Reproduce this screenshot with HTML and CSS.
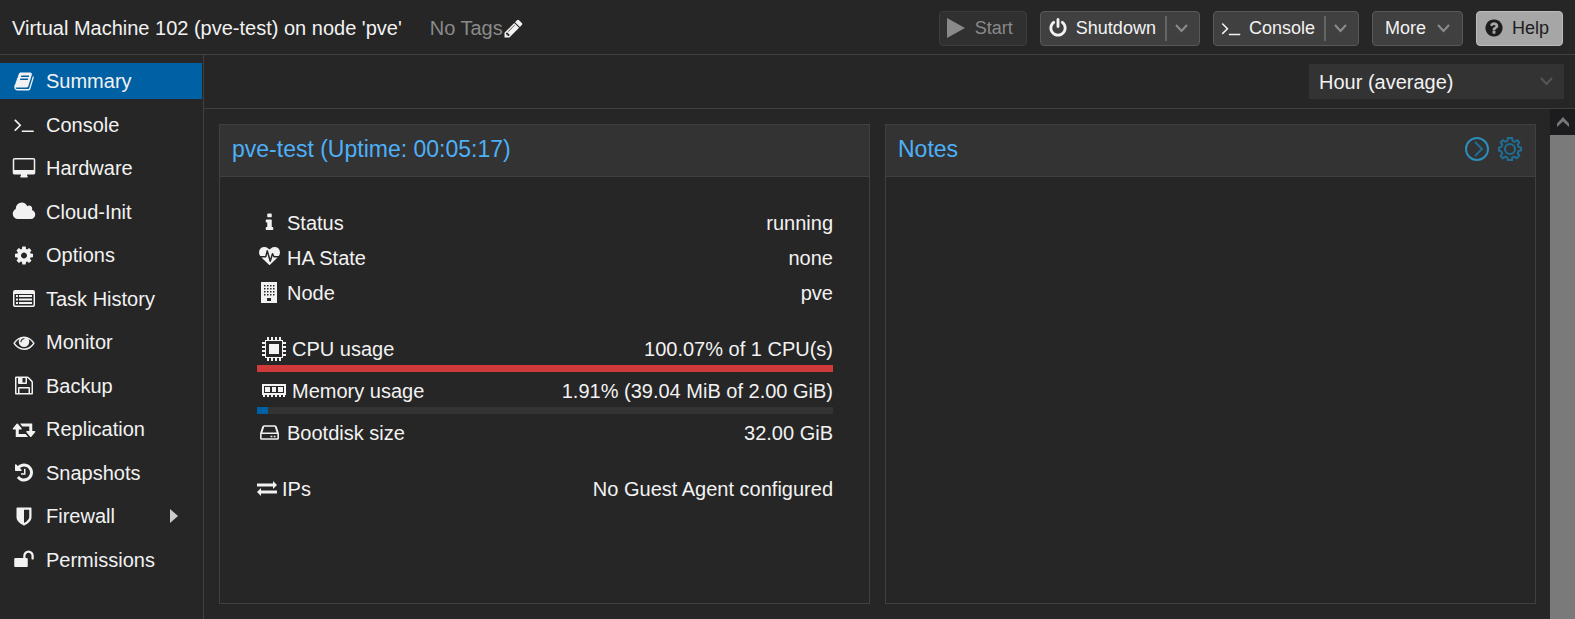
FILE: index.html
```html
<!DOCTYPE html>
<html lang="en">
<head>
<meta charset="utf-8">
<title>Virtual Machine 102</title>
<link rel="stylesheet" href="styles.css">
</head>
<body>
<header class="topbar">
  <h1 class="vm-title">Virtual Machine 102 (pve-test) on node 'pve'</h1>
  <div class="tags">
    <span>No Tags</span>
    <button class="icon-button tag-edit" type="button" aria-label="Edit tags"><svg class="icon" viewBox="0 0 1792 1792"><path d="M491 1536l91-91-235-235-91 91v107h128v128h107zm523-928q0-22-22-22-10 0-17 7l-542 542q-7 7-7 17 0 22 22 22 10 0 17-7l542-542q7-7 7-17zm-54-192l416 416-832 832h-416v-416zm683 96q0 53-37 90l-166 166-416-416 166-165q36-38 90-38 53 0 91 38l235 234q37 39 37 91z"/></svg></button>
  </div>
  <div class="actions">
    <button class="btn" type="button" disabled><svg class="btn-icon" viewBox="0 0 20 20"><path d="M0 0L18 10 0 20z"/></svg>Start</button>
    <div class="split">
      <button class="split-main" type="button"><svg class="btn-icon" viewBox="0 0 1792 1792"><path d="M1664 896q0 156-61 298t-164 245-245 164-298 61-298-61-245-164-164-245-61-298q0-182 80.5-343t226.5-270q43-32 95.5-25t83.5 50q32 42 24.5 94.5t-49.5 84.5q-98 74-151.5 181t-53.5 228q0 104 40.5 198.5t109.5 163.5 163.5 109.5 198.5 40.5 198.5-40.5 163.5-109.5 109.5-163.5 40.5-198.5q0-121-53.5-228t-151.5-181q-42-32-49.5-84.5t24.5-94.5q31-43 84-50t95 25q146 109 226.5 270t80.5 343zm-640-768v640q0 52-38 90t-90 38-90-38-38-90v-640q0-52 38-90t90-38 90 38 38 90z"/></svg>Shutdown</button>
      <button class="split-arrow" type="button" aria-label="Shutdown options"><svg class="chevron" viewBox="0 0 13 9"><path d="M1 1l5.500 6L12 1"/></svg></button>
    </div>
    <div class="split">
      <button class="split-main" type="button"><svg class="btn-icon" viewBox="0 0 1792 1792"><path d="M649 983l-466 466q-10 10-23 10t-23-10l-50-50q-10-10-10-23t10-23l393-393-393-393q-10-10-10-23t10-23l50-50q10-10 23-10t23 10l466 466q10 10 10 23t-10 23zm1079 457v64q0 14-9 23t-23 9h-960q-14 0-23-9t-9-23v-64q0-14 9-23t23-9h960q14 0 23 9t9 23z"/></svg>Console</button>
      <button class="split-arrow" type="button" aria-label="Console options"><svg class="chevron" viewBox="0 0 13 9"><path d="M1 1l5.500 6L12 1"/></svg></button>
    </div>
    <button class="btn btn-menu" type="button">More<svg class="chevron" viewBox="0 0 13 9"><path d="M1 1l5.500 6L12 1"/></svg></button>
    <button class="btn btn-help" type="button"><svg class="btn-icon" viewBox="0 0 1792 1792"><path d="M1024 1376v-192q0-14-9-23t-23-9h-192q-14 0-23 9t-9 23v192q0 14 9 23t23 9h192q14 0 23-9t9-23zm256-672q0-88-55.500-163t-138.500-116-170-41q-243 0-371 213-15 24 8 42l132 100q7 6 19 6 16 0 25-12 53-68 86-92 34-24 86-24 48 0 85.500 26t37.500 59q0 38-20 61t-68 45q-63 28-115.500 86.500t-52.500 125.500v36q0 14 9 23t23 9h192q14 0 23-9t9-23q0-19 21.500-49.500t54.500-49.500q32-18 49-28.500t46-35 44.500-48 28-60.500 12.500-81zm384 192q0 209-103 385.500t-279.500 279.500-385.500 103-385.500-103-279.500-279.500-103-385.500 103-385.500 279.500-279.500 385.500-103 385.500 103 279.500 279.500 103 385.500z"/></svg>Help</button>
  </div>
</header>

<div class="workspace">
  <nav class="sidebar" aria-label="Virtual machine">
    <ul class="menu">
      <li><a class="item active" href="#summary"><svg class="icon" viewBox="0 0 1792 1792"><path d="M1703 478q40 57 18 129l-275 906q-19 64-76.500 107.500t-122.500 43.500h-923q-77 0-148.500-53.500t-99.500-131.500q-24-67-2-127 0-4 3-27t4-37q1-8-3-21.500t-3-19.500q2-11 8-21t16.500-23.500 16.500-23.500q23-38 45-91.500t30-91.500q3-10 .5-30t-.5-28q3-11 17-28t17-23q21-36 42-92t25-90q1-9-2.500-32t.5-28q4-13 22-30.500t22-22.500q19-26 42.500-84.500t27.500-96.500q1-8-3-25.500t-2-26.500q2-8 9-18t18-23 17-21q8-12 16.500-30.500t15-35 16-36 19.500-32 26.500-23.500 36-11.500 47.500 5.500l-1 3q38-9 51-9h761q74 0 114 56t18 130l-274 906q-36 119-71.500 153.500t-128.500 34.500h-869q-27 0-38 15-11 16-1 43 24 70 144 70h923q29 0 56-15.500t35-41.500l300-987q7-22 5-57 38 15 59 43zm-1064 2q-4 13 2 22.500t20 9.500h608q13 0 25.500-9.500t16.500-22.500l21-64q4-13-2-22.500t-20-9.500h-608q-13 0-25.500 9.500t-16.500 22.500zm-83 256q-4 13 2 22.500t20 9.500h608q13 0 25.500-9.500t16.500-22.500l21-64q4-13-2-22.500t-20-9.500h-608q-13 0-25.500 9.500t-16.500 22.500z"/></svg>Summary</a></li>
      <li><a class="item" href="#console"><svg class="icon" viewBox="0 0 1792 1792"><path d="M649 983l-466 466q-10 10-23 10t-23-10l-50-50q-10-10-10-23t10-23l393-393-393-393q-10-10-10-23t10-23l50-50q10-10 23-10t23 10l466 466q10 10 10 23t-10 23zm1079 457v64q0 14-9 23t-23 9h-960q-14 0-23-9t-9-23v-64q0-14 9-23t23-9h960q14 0 23 9t9 23z"/></svg>Console</a></li>
      <li><a class="item" href="#hardware"><svg class="icon" viewBox="-64 0 1920 1792"><path d="M1728 992v-832q0-13-9.500-22.500t-22.500-9.500h-1600q-13 0-22.500 9.500t-9.500 22.500v832q0 13 9.500 22.500t22.500 9.500h1600q13 0 22.500-9.500t9.500-22.500zm128-832v1088q0 66-47 113t-113 47h-544q0 37 16 77.500t32 71 16 43.500q0 26-19 45t-45 19h-512q-26 0-45-19t-19-45q0-14 16-44t32-70 16-78h-544q-66 0-113-47t-47-113v-1088q0-66 47-113t113-47h1600q66 0 113 47t47 113z"/></svg>Hardware</a></li>
      <li><a class="item" href="#cloud-init"><svg class="icon" viewBox="64 0 1920 1792"><path d="M1984 1152q0 159-112.500 271.500t-271.500 112.500h-1088q-185 0-316.500-131.500t-131.500-316.500q0-132 71-241.500t187-163.500q-2-28-2-43 0-212 150-362t362-150q158 0 286.500 88t187.500 230q70-62 166-62 106 0 181 75t75 181q0 75-41 138 129 30 213 134.500t84 239.500z"/></svg>Cloud-Init</a></li>
      <li><a class="item" href="#options"><svg class="icon" viewBox="0 0 1792 1792"><path d="M1152 896q0-106-75-181t-181-75-181 75-75 181 75 181 181 75 181-75 75-181zm512-109v222q0 12-8 23t-20 13l-185 28q-19 54-39 91 35 50 107 138 10 12 10 25t-9 23q-27 37-99 108t-94 71q-12 0-26-9l-138-108q-44 23-91 38-16 136-29 186-7 28-36 28h-222q-14 0-24.500-8.500t-11.500-21.500l-28-184q-49-16-90-37l-141 107q-10 9-25 9-14 0-25-11-126-114-165-168-7-10-7-23 0-12 8-23 15-21 51-66.500t54-70.500q-27-50-41-99l-183-27q-13-2-21-12.500t-8-23.500v-222q0-12 8-23t19-13l186-28q14-46 39-92-40-57-107-138-10-12-10-24 0-10 9-23 26-36 98.500-107.500t94.500-71.500q13 0 26 10l138 107q44-23 91-38 16-136 29-186 7-28 36-28h222q14 0 24.500 8.500t11.500 21.500l28 184q49 16 90 37l142-107q9-9 24-9 13 0 25 10 129 119 165 170 7 8 7 22 0 12-8 23-15 21-51 66.500t-54 70.500q26 50 41 98l183 28q13 2 21 12.500t8 23.500z"/></svg>Options</a></li>
      <li><a class="item" href="#task-history"><svg class="icon" viewBox="0 0 24 21"><path fill-rule="evenodd" d="M3 2h18q2 0 2 2v13q0 2-2 2H3q-2 0-2-2V4q0-2 2-2zM2.500 6v10.500q0 1 1 1h17q1 0 1-1V6zM4 7h2v2H4zM4 10.500h2v2H4zM4 14h2v2H4zM7 7h13v2H7zM7 10.500h13v2H7zM7 14h13v2H7z"/></svg>Task History</a></li>
      <li><a class="item" href="#monitor"><svg class="icon" viewBox="0 0 1792 1792"><path d="M1664 960q-152-236-381-353 61 104 61 225 0 185-131.500 316.500t-316.500 131.500-316.500-131.500-131.500-316.500q0-121 61-225-229 117-381 353 133 205 333.500 326.500t434.500 121.500 434.500-121.500 333.500-326.500zm-720-384q0-20-14-34t-34-14q-125 0-214.500 89.500t-89.500 214.500q0 20 14 34t34 14 34-14 14-34q0-86 61-147t147-61q20 0 34-14t14-34zm848 384q0 34-20 69-140 230-376.500 368.500t-499.500 138.500-499.500-139-376.500-368q-20-35-20-69t20-69q140-229 376.500-368t499.500-139 499.500 139 376.500 368q20 35 20 69z"/></svg>Monitor</a></li>
      <li><a class="item" href="#backup"><svg class="icon" viewBox="0 0 1792 1792"><path d="M512 1536h768v-384h-768v384zm896 0h128v-896q0-14-10-38.500t-20-34.500l-281-281q-10-10-34-20t-39-10v416q0 40-28 68t-68 28h-576q-40 0-68-28t-28-68v-416h-128v1280h128v-416q0-40 28-68t68-28h832q40 0 68 28t28 68v416zm-384-928v-320q0-13-9.500-22.500t-22.500-9.500h-192q-13 0-22.500 9.500t-9.500 22.500v320q0 13 9.500 22.500t22.500 9.500h192q13 0 22.500-9.500t9.500-22.500zm640 32v928q0 40-28 68t-68 28h-1344q-40 0-68-28t-28-68v-1344q0-40 28-68t68-28h928q40 0 88 20t76 48l280 280q28 28 48 76t20 88z"/></svg>Backup</a></li>
      <li><a class="item" href="#replication"><svg class="icon" viewBox="0 0 1920 1792"><path d="M1280 1504q0 13-9.500 22.500t-22.500 9.500h-960q-8 0-13.500-2t-9-7-5.500-8-3-11.500-1-11.500v-600h-192q-26 0-45-19t-19-45q0-24 15-41l320-384q19-22 49-22t49 22l320 384q15 17 15 41 0 26-19 45t-45 19h-192v384h576q16 0 25 11l160 192q7 10 7 21zm640-416q0 24-15 41l-320 384q-20 23-49 23t-49-23l-320-384q-15-17-15-41 0-26 19-45t45-19h192v-384h-576q-16 0-25-12l-160-192q-7-9-7-20 0-13 9.500-22.500t22.500-9.500h960q8 0 13.500 2t9 7 5.500 8 3 11.500 1 11.500v600h192q26 0 45 19t19 45z"/></svg>Replication</a></li>
      <li><a class="item" href="#snapshots"><svg class="icon" viewBox="0 0 1792 1792"><path d="M1664 896q0 156-61 298t-164 245-245 164-298 61q-172 0-327-72.500t-264-204.500q-7-10-6.500-22.500t8.500-20.500l137-138q10-9 25-9 16 2 23 12 73 95 179 147t225 52q104 0 198.500-40.500t163.500-109.500 109.500-163.500 40.500-198.500-40.500-198.500-109.500-163.500-163.500-109.500-198.500-40.500q-98 0-188 35.500t-160 101.500l137 138q31 30 14 69-17 40-59 40h-448q-26 0-45-19t-19-45v-448q0-42 40-59 39-17 69 14l130 129q107-101 244.500-156.500t284.500-55.500q156 0 298 61t245 164 164 245 61 298zm-640-288v448q0 14-9 23t-23 9h-320q-14 0-23-9t-9-23v-64q0-14 9-23t23-9h224v-352q0-14 9-23t23-9h64q14 0 23 9t9 23z"/></svg>Snapshots</a></li>
      <li><a class="item" href="#firewall"><svg class="icon" viewBox="0 0 1792 1792"><path d="M1344 960v-640h-448v1137q119-63 213-137 235-184 235-360zm192-768v768q0 86-33.500 170.500t-83 150-118 127.500-126.500 103-121 77.500-89.500 49.500-42.500 20q-12 6-26 6t-26-6q-16-7-42.500-20t-89.500-49.500-121-77.500-126.500-103-118-127.500-83-150-33.500-170.500v-768q0-26 19-45t45-19h1152q26 0 45 19t19 45z"/></svg>Firewall<svg class="expander" viewBox="0 0 8 14"><path d="M0 0L8 7 0 14z"/></svg></a></li>
      <li><a class="item" href="#permissions"><svg class="icon" viewBox="0 0 1792 1792"><path d="M1728 576v256q0 26-19 45t-45 19h-64q-26 0-45-19t-19-45v-256q0-106-75-181t-181-75-181 75-75 181v192h96q40 0 68 28t28 68v576q0 40-28 68t-68 28h-960q-40 0-68-28t-28-68v-576q0-40 28-68t68-28h672v-192q0-185 131.500-316.500t316.500-131.500 316.500 131.500 131.500 316.500z"/></svg>Permissions</a></li>
    </ul>
  </nav>

  <main class="content">
    <div class="toolbar">
      <div class="select-wrap">
        <select class="range" aria-label="Time range">
          <option>Hour (average)</option>
          <option>Day (average)</option>
          <option>Week (average)</option>
        </select>
        <svg class="chevron select-arrow" viewBox="0 0 13 9"><path d="M1 1l5.500 6L12 1"/></svg>
      </div>
    </div>
    <div class="scroll-area">
      <div class="panels">
        <section class="panel">
          <div class="panel-head"><h2 class="panel-title">pve-test (Uptime: 00:05:17)</h2></div>
          <div class="panel-body">
            <div class="group">
              <div class="row"><svg class="icon" viewBox="0 0 1792 1792"><path d="M1216 1344v128q0 26-19 45t-45 19h-512q-26 0-45-19t-19-45v-128q0-26 19-45t45-19h64v-384h-64q-26 0-45-19t-19-45v-128q0-26 19-45t45-19h384q26 0 45 19t19 45v576h64q26 0 45 19t19 45zm-128-1152v192q0 26-19 45t-45 19h-256q-26 0-45-19t-19-45v-192q0-26 19-45t45-19h256q26 0 45 19t19 45z"/></svg><span>Status</span><span class="value">running</span></div>
              <div class="row"><svg class="icon" viewBox="0 0 1792 1792"><path d="M1280 896h305q-5 6-10 10.500t-9 7.500l-3 4-623 600q-18 18-44 18t-44-18l-624-602q-5-2-21-20h369q22 0 39.500-13.500t22.500-34.500l70-281 190 667q6 20 23 33t39 13q21 0 38-13t23-33l146-485 56 112q18 35 57 35zm512-428q0 145-103 300h-369l-111-221q-8-17-25.500-27t-36.500-8q-45 5-56 46l-129 430-196-686q-6-20-23.500-33t-39.500-13-39 13.500-22 34.500l-116 464h-423q-103-155-103-300 0-220 127-344t351-124q62 0 126.500 21.500t120 58 95.500 68.500 76 68q36-36 76-68t95.500-68.500 120-58 126.500-21.500q224 0 351 124t127 344z"/></svg><span>HA State</span><span class="value">none</span></div>
              <div class="row"><svg class="icon" viewBox="0 0 21 21"><path fill-rule="evenodd" d="M2 0h16v21H2zM5 3h1.500v1.500H5zM8 3h1.500v1.500H8zM11 3h1.500v1.500H11zM14 3h1.500v1.500H14zM5 6h1.500v1.500H5zM8 6h1.500v1.500H8zM11 6h1.500v1.500H11zM14 6h1.500v1.500H14zM5 9h1.500v1.500H5zM8 9h1.500v1.500H8zM11 9h1.500v1.500H11zM14 9h1.500v1.500H14zM5 12h1.500v1.500H5zM8 12h1.500v1.500H8zM11 12h1.500v1.500H11zM14 12h1.500v1.500H14zM8 16h4v3H8z"/></svg><span>Node</span><span class="value">pve</span></div>
            </div>
            <div class="group">
              <div class="row"><svg class="icon icon-wide" viewBox="0 0 24 24"><path fill-rule="evenodd" d="M5 0h2v3h2V0h2v3h2V0h2v3h2V0h2v3h2v2h3v2h-3v2h3v2h-3v2h3v2h-3v2h3v2h-3v2h-2v3h-2v-3h-2v3h-2v-3h-2v3H9v-3H7v3H5v-3H3v-2H0v-2h3v-2H0v-2h3v-2H0V9h3V7H0V5h3V3h2zM4 4v16h16V4zM7 7h10v10H7z"/></svg><span>CPU usage</span><span class="value">100.07% of 1 CPU(s)</span></div>
              <div class="meter" role="progressbar" aria-label="CPU usage" aria-valuenow="100"><div class="fill critical" style="width: 100%"></div></div>
              <div class="row"><svg class="icon icon-wide" viewBox="0 0 24 24"><path fill-rule="evenodd" d="M0 5h24v11h-1v2h-2v-2h-2v2h-2v-2h-2v2h-2v-2h-2v2H9v-2H7v2H5v-2H3v2H1v-2H0zM2 7v7h20V7zM3 8h5v5H3zM10 8h4v5h-4zM16 8h5v5h-5z"/></svg><span>Memory usage</span><span class="value">1.91% (39.04 MiB of 2.00 GiB)</span></div>
              <div class="meter" role="progressbar" aria-label="Memory usage" aria-valuenow="2"><div class="fill" style="width: 1.91%"></div></div>
              <div class="row"><svg class="icon" viewBox="0 0 20 20"><path fill-rule="evenodd" d="M5 3h10q1.500 0 2 1.500L19 11v4.500q0 1.500-1.500 1.500h-15Q1 17 1 15.500V11l2-6.500Q3.500 3 5 3zM5 4.500L3.200 10h13.600L15 4.500zM2.500 11.500v4h15v-4zM11 13h1.700v1.500H11zM14 13h1.700v1.500H14z"/></svg><span>Bootdisk size</span><span class="value">32.00 GiB</span></div>
            </div>
            <div class="group">
              <div class="row"><svg class="icon icon-tight" viewBox="0 0 20 20"><path d="M0 5h16V2.500L20 6.500l-4 4V8H0zM20 15H4v2.500L0 13.500l4-4V12h16z"/></svg><span>IPs</span><span class="value">No Guest Agent configured</span></div>
            </div>
          </div>
        </section>
        <section class="panel">
          <div class="panel-head">
            <h2 class="panel-title">Notes</h2>
            <div class="tools">
              <button class="icon-button" type="button" aria-label="Collapse notes"><svg class="tool tool-bright" viewBox="0 0 24 24"><circle cx="12" cy="12" r="11"/><path class="tool-dim" d="M10 5l7 7-7 7"/></svg></button>
              <button class="icon-button" type="button" aria-label="Notes settings"><svg class="tool" viewBox="0 0 24 24"><circle cx="12" cy="12" r="5"/><path d="M10 1h4l.6 2.900 2 .9 2.600-1.600 2.100 2.100L19.700 7.900l.9 2 2.400.6v3l-2.400.6-.9 2 1.600 2.600-2.600 2.600-2.600-1.600-2 .9L14 23h-4l-.6-2.400-2-.9-2.600 1.600-2.100-2.100 1.600-2.600-.9-2L1 13.500v-3l2.400-.6.9-2L2.700 5.300l2.100-2.100 2.600 1.600 2-.9z"/></svg></button>
            </div>
          </div>
          <div class="panel-body"></div>
        </section>
      </div>
      <div class="scrollbar" aria-hidden="true">
        <div class="scroll-up"><svg class="scroll-glyph" viewBox="0 0 12 10"><path d="M0 10V6.500L6 0l6 6.500V10L6 4.500z"/></svg></div>
        <div class="scroll-thumb"></div>
      </div>
    </div>
  </main>
</div>
</body>
</html>
```

FILE: styles.css
```css
* {
  box-sizing: border-box;
}

body {
  margin: 0;
  min-height: 100vh;
  display: flex;
  flex-direction: column;
  background: #262626;
  color: #f2f2f2;
  font: 20px/24px "Liberation Sans", Arial, sans-serif;
}

button,
select {
  font: inherit;
  color: inherit;
  margin: 0;
}

h1,
h2 {
  margin: 0;
  font-weight: normal;
}

svg {
  display: block;
  flex: none;
  fill: currentColor;
}

/* Top bar */

.topbar {
  display: flex;
  align-items: center;
  height: 55px;
  padding: 2px 12px 0;
  border-bottom: 1px solid #404040;
}

.vm-title {
  font-size: 20px;
  line-height: 24px;
}

.tags {
  display: flex;
  align-items: center;
  margin-left: 28px;
  color: #8a8a8a;
}

.icon-button {
  display: block;
  padding: 0;
  border: 0;
  background: none;
}

.tag-edit {
  color: #f2f2f2;
}

.tag-edit .icon {
  width: 21px;
}

.actions {
  display: flex;
  gap: 13px;
  margin-left: auto;
  font-size: 18px;
}

.btn,
.split {
  display: flex;
  align-items: center;
  height: 35px;
  border: 1px solid #585858;
  border-radius: 4px;
  background: #404040;
}

.btn {
  gap: 8px;
  padding: 0 13px 0 7px;
}

.btn:disabled {
  border-color: #3c3c3c;
  background: #303030;
  color: #8a8a8a;
}

.btn-menu {
  gap: 11px;
  padding: 0 12px;
}

.btn-help {
  border-color: #bbb;
  background: #a6a6a6;
  color: #1c1c1c;
}

.btn-icon {
  width: 20px;
  height: 20px;
}

.split-main,
.split-arrow {
  display: flex;
  align-items: center;
  height: 25px;
  border: 0;
  background: none;
}

.split-main {
  gap: 8px;
  padding: 0 9px 0 7px;
}

.split-arrow {
  padding: 0 11px 0 8px;
  border-left: 2px solid #666;
}

.chevron {
  width: 13px;
  height: 9px;
  fill: none;
  stroke: #8c8c8c;
  stroke-width: 2;
}

/* Sidebar */

.workspace {
  display: flex;
  flex: 1;
}

.sidebar {
  flex: none;
  width: 204px;
  padding: 8px 1px 0 0;
  border-right: 1px solid #404040;
}

.menu {
  display: flex;
  flex-direction: column;
  justify-content: space-between;
  min-height: 515px;
  margin: 0;
  padding: 0;
  list-style: none;
}

.item {
  display: flex;
  align-items: center;
  height: 36px;
  gap: 10px;
  padding: 0 24px 0 12px;
  color: inherit;
  text-decoration: none;
}

.item.active {
  background: #0060a4;
}

.icon {
  width: 24px;
  height: 21px;
}

.expander {
  width: 8px;
  height: 14px;
  margin-left: auto;
  fill: #ccc;
}

/* Content */

.content {
  display: flex;
  flex: 1;
  flex-direction: column;
  min-width: 0;
}

.toolbar {
  display: flex;
  justify-content: flex-end;
  align-items: center;
  height: 54px;
  padding: 0 11px;
  border-bottom: 1px solid #404040;
}

.select-wrap {
  position: relative;
  width: 255px;
}

.range {
  display: block;
  width: 100%;
  height: 35px;
  padding: 0 32px 0 10px;
  border: 0;
  border-radius: 0;
  background: #333;
  appearance: none;
}

.select-arrow {
  position: absolute;
  top: 13px;
  right: 11px;
  stroke: #555;
  pointer-events: none;
}

.scroll-area {
  display: flex;
  flex: 1;
}

.panels {
  display: grid;
  grid-template-columns: 1fr 1fr;
  flex: 1;
  gap: 15px;
  padding: 15px 14px 15px 15px;
}

.panel {
  display: flex;
  flex-direction: column;
  border: 1px solid #404040;
}

.panel-head {
  display: flex;
  align-items: center;
  justify-content: space-between;
  height: 52px;
  padding: 0 13px 3px 12px;
  border-bottom: 1px solid #404040;
  background: #333;
}

.panel-title {
  color: #4eb0f8;
  font-size: 23px;
  line-height: 28px;
}

.tools {
  display: flex;
  gap: 9px;
}

.tool {
  width: 24px;
  height: 24px;
  fill: none;
  stroke: #1f6e96;
  stroke-width: 2;
}

.tool-bright {
  stroke: #2b8dba;
}

.tool-dim {
  stroke: #1f6e96;
}

.panel-body {
  flex: 1;
  padding: 27px 36px 27px 37px;
}

.group + .group {
  margin-top: 21px;
}

.row {
  display: flex;
  align-items: center;
  height: 35px;
  gap: 5px;
  padding-top: 2px;
}

.row .icon {
  width: 25px;
}

.row .icon-wide {
  width: 24px;
  height: 24px;
  margin: 0 1px 0 5px;
}

.row .icon-tight {
  width: 20px;
}

.value {
  margin-left: auto;
}

.meter {
  height: 7px;
  background: #333;
}

.fill {
  height: 100%;
  background: #0060a4;
}

.fill.critical {
  background: #cf3b3b;
}

.scrollbar {
  display: flex;
  flex: none;
  flex-direction: column;
  width: 25px;
}

.scroll-up {
  display: grid;
  place-items: center;
  height: 26px;
  background: #1c1c1e;
}

.scroll-glyph {
  width: 12px;
  height: 10px;
  fill: #777;
}

.scroll-thumb {
  flex: 1;
  background: #7a7a7a;
}
```
